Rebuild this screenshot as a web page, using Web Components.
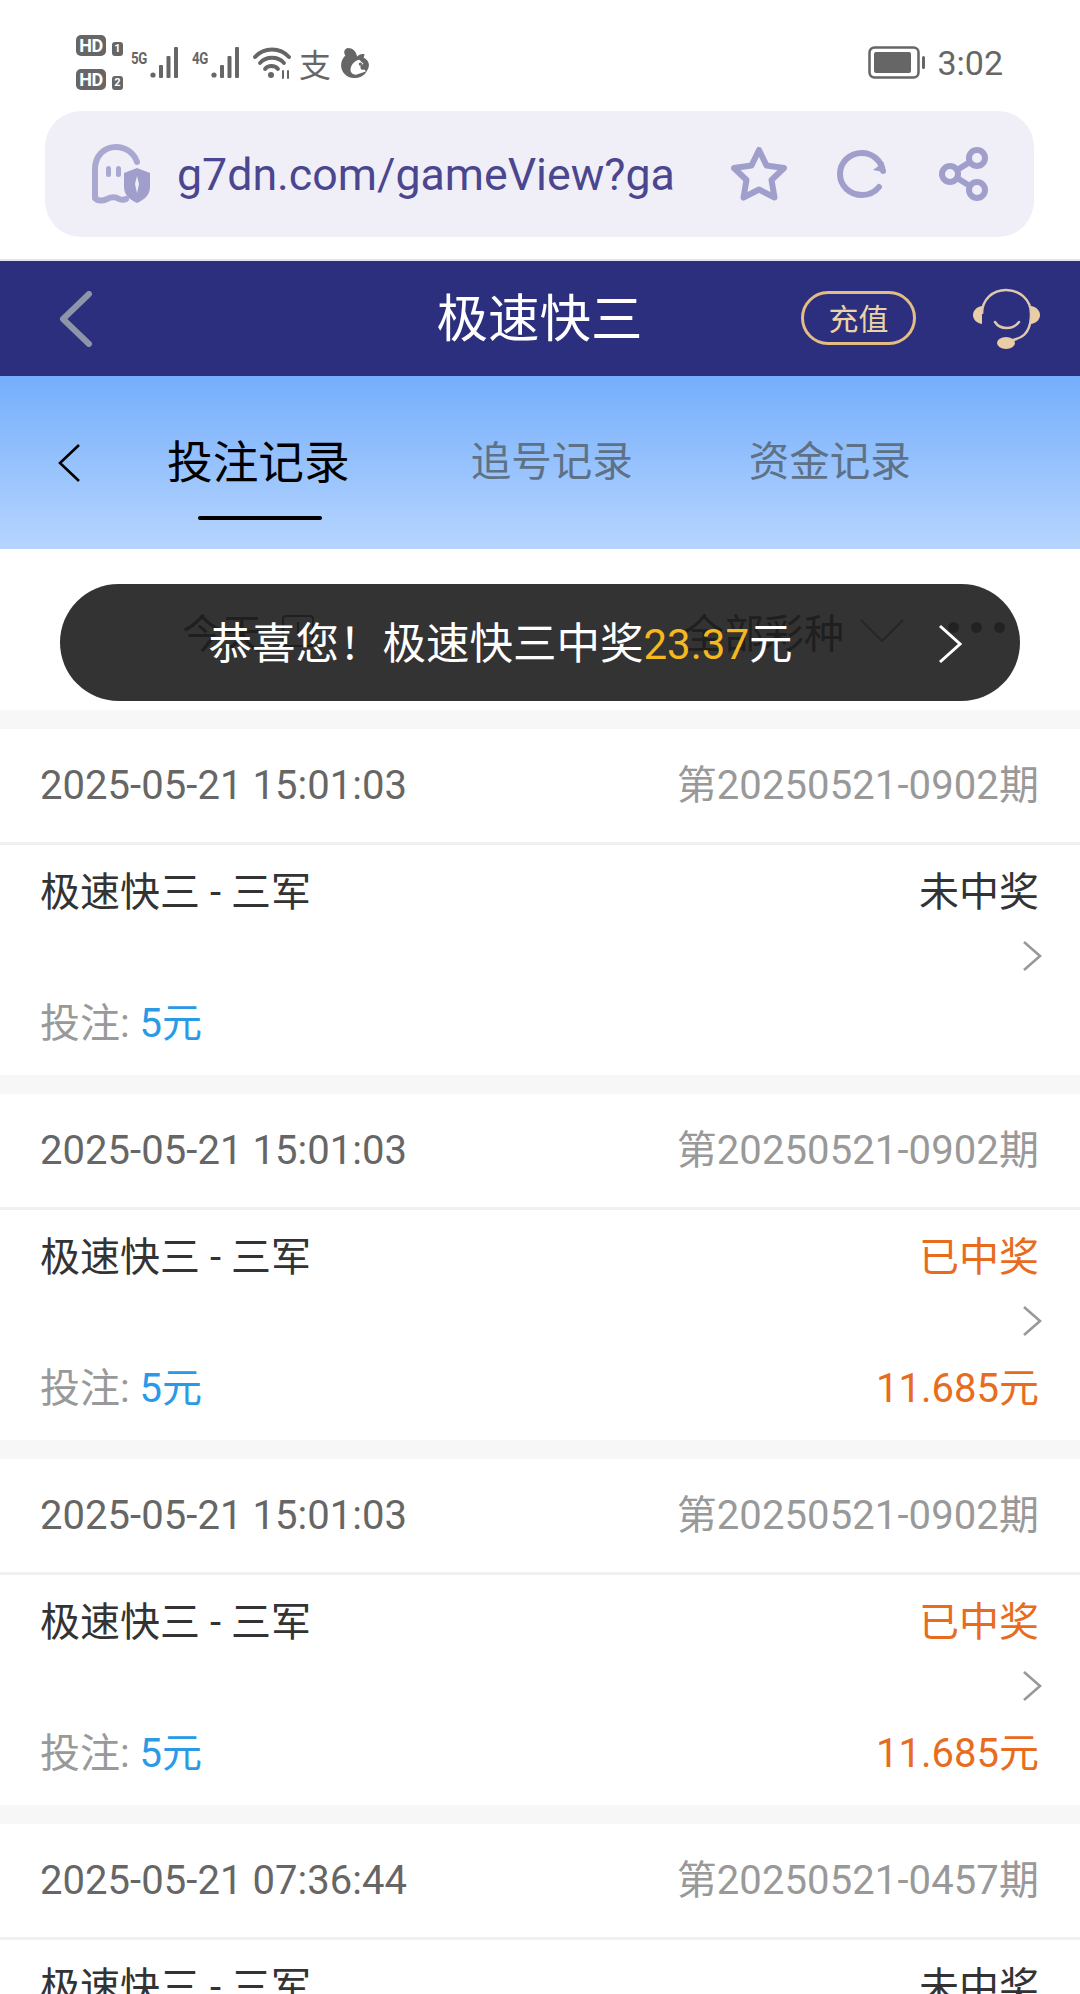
<!DOCTYPE html>
<html lang="zh-CN">
<head>
<meta charset="utf-8">
<title>极速快三</title>
<style>
  html, body { margin: 0; padding: 0; background: #fff; }
  body { width: 1080px; height: 1994px; overflow: hidden; font-family: Roboto, "Noto Sans CJK SC", sans-serif; }
  record-card:last-child { height: 170px; overflow: hidden; }
</style>
</head>
<body>
<status-bar></status-bar>
<url-bar></url-bar>
<app-nav page-title="极速快三"></app-nav>
<record-tabs></record-tabs>
<filter-row></filter-row>
<record-list>
  <record-card time="2025-05-21 15:01:03" issue="第20250521-0902期" status="未中奖"></record-card>
  <record-card time="2025-05-21 15:01:03" issue="第20250521-0902期" status="已中奖" win="11.685元"></record-card>
  <record-card time="2025-05-21 15:01:03" issue="第20250521-0902期" status="已中奖" win="11.685元"></record-card>
  <record-card time="2025-05-21 07:36:44" issue="第20250521-0457期" status="未中奖"></record-card>
</record-list>

<script>
class StatusBar extends HTMLElement {
  connectedCallback() {
    this.attachShadow({ mode: 'open' });
    const signal = `<svg width="32" height="32" viewBox="0 0 32 32" fill="#666">
      <circle cx="3" cy="28" r="2.6"/><rect x="9" y="18" width="4" height="13" rx="1"/>
      <rect x="16.500" y="9" width="4" height="22" rx="1"/><rect x="24" y="0" width="4" height="31" rx="1"/></svg>`;
    this.shadowRoot.innerHTML = `
      <style>
        :host { display: flex; justify-content: space-between; align-items: center; height: 111px; padding: 14px 77px 0 76px; box-sizing: border-box; color: #666; font-family: Roboto, sans-serif; }
        .left, .right, .net { display: flex; align-items: center; }
        .sims { display: flex; flex-direction: column; gap: 13px; width: 55px; }
        .sim { display: flex; align-items: flex-end; gap: 6px; }
        .hd { width: 30px; height: 21px; box-sizing: border-box; background: #666; color: #fff; border-radius: 5px; font: 700 18px/21px Roboto, sans-serif; text-align: center; letter-spacing: -.5px; }
        .no { width: 11px; height: 14px; background: #666; color: #fff; border-radius: 3px; font: 700 11px/14px Roboto, sans-serif; text-align: center; }
        .net { align-items: flex-start; margin-right: 10px; }
        .net b { font: 700 17px/16px "Roboto", sans-serif; margin-top: 3px; width: 19px; letter-spacing: -.5px; transform: scaleX(.78); transform-origin: left; }
        .net svg { display: block; }
        .left svg { flex: none; }
        .zhi { font: 400 32px/32px "Noto Sans CJK SC", sans-serif; margin: 0 9px 0 8px; }
        .time { font-size: 34px; margin-left: 12px; color: #666; }
      </style>
      <div class="left">
        <div class="sims">
          <div class="sim"><span class="hd">HD</span><span class="no">1</span></div>
          <div class="sim"><span class="hd">HD</span><span class="no">2</span></div>
        </div>
        <div class="net"><b>5G</b>${signal}</div>
        <div class="net"><b>4G</b>${signal}</div>
        <svg width="38" height="32" viewBox="0 0 38 32" fill="none" stroke="#666" stroke-width="3.800" stroke-linecap="round">
          <path d="M2 10C11 0 27 0 36 10"/><path d="M7 16C13 9 25 9 31 16"/><path d="M12 22C15 18 22 18 25 22"/>
          <circle cx="18" cy="28" r="3" fill="#666" stroke="none"/>
          <path d="M30 24v7M35 24v7" stroke-width="2"/>
        </svg>
        <span class="zhi">支</span>
        <svg width="30" height="30" viewBox="0 0 28 28" fill="#666">
          <path d="M7 0c5 0 8 3 9 8 2-2 4-3 7-2l-1 3c3 1 5 4 5 7s-2 5-3 7c-2 3-6 5-11 5-7 0-12-6-12-12 0-4 2-7 4-9C3 4 4 1 7 0z"/>
          <path d="M18 11c-5 1-9 6-8 11 1 2 3 3 5 3l9-3-1-2c-2 1-4 0-4-2s2-3 3-3z" fill="#fff"/>
          <circle cx="19" cy="15" r="1.500" fill="#666"/>
        </svg>
      </div>
      <div class="right">
        <svg width="57" height="33" viewBox="0 0 57 33">
          <rect x="1.500" y="1.500" width="49" height="30" rx="5" fill="none" stroke="#666" stroke-width="2.500"/>
          <rect x="6" y="6" width="37" height="21" rx="2" fill="#666"/>
          <rect x="54" y="10" width="3" height="13" rx="1.500" fill="#666"/>
        </svg>
        <span class="time">3:02</span>
      </div>`;
  }
}

class UrlBar extends HTMLElement {
  connectedCallback() {
    this.attachShadow({ mode: 'open' });
    this.shadowRoot.innerHTML = `
      <style>
        :host { display: block; padding: 0 46px 0 45px; height: 150px; box-sizing: border-box; border-bottom: 2px solid #dfe3f3; }
        .bar { display: flex; align-items: center; height: 126px; background: #f0eff8; border-radius: 36px; padding: 0 45px 0 46px; }
        svg { display: block; flex: none; }
        .url { font: 400 44.700px/50px Roboto, sans-serif; color: #4a468f; margin: 2px 0 0 26px; width: 500px; white-space: nowrap; overflow: hidden; }
        .star { margin-left: 55px; }
        .reload { margin-left: 50px; }
        .share { margin-left: 52px; }
      </style>
      <div class="bar">
        <svg width="60" height="60" viewBox="0 0 60 60" fill="none">
          <path d="M4 54V25C4 12 13 3 25 3c10 0 18 6 21 15" stroke="#a9a8d1" stroke-width="6" stroke-linecap="round"/>
          <path d="M4 52c0 6 8 5 12 3 6-3 9-2 12 0 3 1 5 1 7 0" stroke="#a9a8d1" stroke-width="6" stroke-linecap="round"/>
          <rect x="15" y="22" width="5" height="11" rx="2.500" fill="#a9a8d1"/><rect x="25" y="22" width="5" height="11" rx="2.500" fill="#a9a8d1"/>
          <path d="M46 24l13 5v14c0 8-6 13-13 16-7-3-13-8-13-16V29z" fill="#a09fcc"/>
          <path d="M46 32l2 8-2 9-2-9z" fill="#f0eff8"/>
        </svg>
        <span class="url">g7dn.com/gameView?ga</span>
        <svg class="star" width="56" height="56" viewBox="0 0 56 56" fill="none" stroke="#a09fcc" stroke-width="6" stroke-linejoin="round">
          <path d="M28 4l7.500 15.500 17.500 2.500-12.500 12 3 17.500L28 43.500 12.500 51.500l3-17.500L3 22l17.500-2.500z"/>
        </svg>
        <svg class="reload" width="50" height="50" viewBox="0 0 50 50" fill="none" stroke="#a09fcc" stroke-width="6" stroke-linecap="round">
          <path d="M46 22C44 11 35 4 25 4 13 4 3 13 3 25s10 21 22 21c7 0 13-3 17-8"/>
          <path d="M36 21l10 2 1-10" stroke="none" fill="#a09fcc"/>
        </svg>
        <svg class="share" width="50" height="54" viewBox="0 0 50 54" fill="none" stroke="#a09fcc" stroke-width="6">
          <circle cx="11" cy="27" r="8"/><circle cx="38" cy="11" r="8"/><circle cx="38" cy="43" r="8"/>
          <path d="M18 23l13-8M18 31l13 8"/>
        </svg>
      </div>`;
  }
}

class AppNav extends HTMLElement {
  connectedCallback() {
    this.attachShadow({ mode: 'open' });
    this.shadowRoot.innerHTML = `
      <style>
        :host { display: flex; align-items: center; position: relative; height: 115px; background: #2c2f7e; }
        .back { margin-left: 59px; display: block; }
        h1 { position: absolute; left: 0; right: 0; top: -4px; margin: 0; text-align: center; font: 400 51.500px/115px "Noto Sans CJK SC", sans-serif; color: #fff; padding-right: 1px; }
        .pay { position: relative; margin-left: auto; width: 115px; height: 54px; box-sizing: border-box; border: 3px solid #e4bd85; border-radius: 27px; color: #ecd3a6; font: 400 30px/47px "Noto Sans CJK SC", sans-serif; text-align: center; margin-top: -2px; }
        .head { position: relative; display: block; margin: 0 40px 0 57px; }
      </style>
      <svg class="back" width="34" height="56" viewBox="0 0 34 56" fill="none" stroke="#8f95a8" stroke-width="6" stroke-linecap="round" stroke-linejoin="round"><path d="M30 3L4 28l26 25"/></svg>
      <h1>${this.getAttribute('page-title')}</h1>
      <span class="pay">充值</span>
      <svg class="head" width="67" height="62" viewBox="0 0 67 62" fill="none">
        <path d="M9 26C9 11 20 2 33 2s25 9 25 24c0 10-3 19-10 23-4 2-8 3-11 4" stroke="#dfc8ae" stroke-width="2.500"/>
        <path d="M22 34c5 8 18 8 24 0" stroke="#dfc8ae" stroke-width="2.500" stroke-linecap="round"/>
        <path d="M9 18v18C3 35 0 31 0 27s3-8 9-9zM58 18v18c6-1 9-5 9-9s-3-8-9-9z" fill="#e8cda6"/>
        <ellipse cx="33" cy="55" rx="9" ry="6" fill="#e8cda6"/>
      </svg>`;
  }
}

class RecordTabs extends HTMLElement {
  connectedCallback() {
    this.attachShadow({ mode: 'open' });
    this.shadowRoot.innerHTML = `
      <style>
        :host { display: flex; height: 173px; box-sizing: border-box; background: linear-gradient(#75aefc, #b6d5fe); font-family: "Noto Sans CJK SC", sans-serif; }
        svg { display: block; margin: 68px 0 0 58px; }
        .tab { font-size: 40.500px; line-height: 58px; color: #5e7186; padding-top: 54px; position: relative; }
        .on { font-size: 45.700px; color: #000; margin-left: 87px; }
        .on::after { content: ""; position: absolute; left: 31px; width: 124px; top: 140px; height: 4px; border-radius: 2px; background: #000; }
        .chase { margin-left: 121px; }
        .funds { margin-left: 116px; }
      </style>
      <svg width="22" height="38" viewBox="0 0 22 38" fill="none" stroke="#000" stroke-width="2.600"><path d="M21 1L2 19l19 18"/></svg>
      <span class="tab on">投注记录</span>
      <span class="tab chase">追号记录</span>
      <span class="tab funds">资金记录</span>`;
  }
}

class FilterRow extends HTMLElement {
  connectedCallback() {
    this.attachShadow({ mode: 'open' });
    this.shadowRoot.innerHTML = `
      <style>
        :host { display: block; position: relative; height: 161px; background: #fff; font-family: "Noto Sans CJK SC", sans-serif; }
        .row { display: flex; align-items: center; height: 72px; padding: 46px 0 0 182px; font-size: 40px; color: #999; }
        .cal { margin-left: 20px; display: block; }
        .all { margin-left: 370px; }
        .arrow { display: block; margin-left: 16px; }
        .dots { display: flex; gap: 12px; margin: -8px 0 0 44px; }
        .dots i { width: 11px; height: 11px; border-radius: 50%; background: #aaa; }
      </style>
      <div class="row">
        <span>今天</span>
        <svg class="cal" width="32" height="36" viewBox="0 0 32 36" fill="none" stroke="#999" stroke-width="2"><rect x="1" y="3" width="30" height="30" rx="3"/><path d="M16 9v14"/></svg>
        <span class="all">全部彩种</span>
        <svg class="arrow" width="44" height="24" viewBox="0 0 44 24" fill="none" stroke="#bbb" stroke-width="2"><path d="M1 1l21 21L43 1"/></svg>
        <div class="dots"><i></i><i></i><i></i></div>
      </div>
      <win-toast></win-toast>`;
  }
}

class WinToast extends HTMLElement {
  connectedCallback() {
    this.attachShadow({ mode: 'open' });
    this.shadowRoot.innerHTML = `
      <style>
        :host { position: absolute; left: 60px; top: 35px; width: 960px; height: 117px; border-radius: 59px; background: rgba(0, 0, 0, .8); display: flex; align-items: center; justify-content: center; color: #fff; }
        .msg { font: 400 43.500px/50px "Noto Sans CJK SC", sans-serif; margin-left: -79px; white-space: nowrap; }
        b { font: 400 42px Roboto, sans-serif; color: #f5b81f; }
        svg { position: absolute; right: 58px; top: 40px; }
      </style>
      <span class="msg">恭喜您！极速快三中奖<b>23.37</b>元</span>
      <svg width="24" height="40" viewBox="0 0 24 40" fill="none" stroke="#fff" stroke-width="3"><path d="M2 2l20 18L2 38"/></svg>`;
  }
}

class RecordList extends HTMLElement {
  connectedCallback() {
    this.attachShadow({ mode: 'open' });
    this.shadowRoot.innerHTML = `
      <style>:host { display: block; background: #f7f7f7; padding-top: 19px; }
      ::slotted(record-card) { margin-bottom: 19px; }</style>
      <slot></slot>`;
  }
}

class RecordCard extends HTMLElement {
  connectedCallback() {
    const win = this.getAttribute('win');
    const status = this.getAttribute('status');
    this.attachShadow({ mode: 'open' });
    this.shadowRoot.innerHTML = `
      <style>
        :host { display: block; background: #fff; font-family: Roboto, "Noto Sans CJK SC", sans-serif; height: 346px; }
        .top { display: flex; justify-content: space-between; align-items: baseline; height: 113px; line-height: 113px; padding: 0 41px 0 40px; border-bottom: 3px solid #f0f0f0; font-size: 40px; }
        .time { color: #666; letter-spacing: .05px; }
        .issue { color: #999; letter-spacing: .1px; }
        .body { display: grid; grid-template-columns: 1fr auto; padding: 19px 41px 0 40px; font-size: 40px; }
        .name { color: #333; line-height: 58px; }
        .status { color: ${status === '已中奖' ? '#e86c1e' : '#333'}; line-height: 58px; text-align: right; }
        .go { grid-column: 2; display: block; justify-self: end; margin: 18px -3px 0 0; }
        .bet { color: #999; line-height: 58px; }
        .bet span { color: #2a9ae6; }
        .win { color: #e86c1e; line-height: 58px; text-align: right; }
        .foot { grid-column: 1 / 3; display: flex; justify-content: space-between; margin-top: 23px; }
      </style>
      <div class="top"><span class="time">${this.getAttribute('time')}</span><span class="issue">${this.getAttribute('issue')}</span></div>
      <div class="body">
        <span class="name">极速快三 - 三军</span>
        <span class="status">${status}</span>
        <svg class="go" width="20" height="32" viewBox="0 0 20 32" fill="none" stroke="#999" stroke-width="2.600"><path d="M2 2l16 14L2 30"/></svg>
        <div class="foot">
          <span class="bet">投注: <span>5元</span></span>
          ${win ? `<span class="win">${win}</span>` : ''}
        </div>
      </div>`;
  }
}

customElements.define('status-bar', StatusBar);
customElements.define('url-bar', UrlBar);
customElements.define('app-nav', AppNav);
customElements.define('record-tabs', RecordTabs);
customElements.define('filter-row', FilterRow);
customElements.define('win-toast', WinToast);
customElements.define('record-list', RecordList);
customElements.define('record-card', RecordCard);
</script>
</body>
</html>
